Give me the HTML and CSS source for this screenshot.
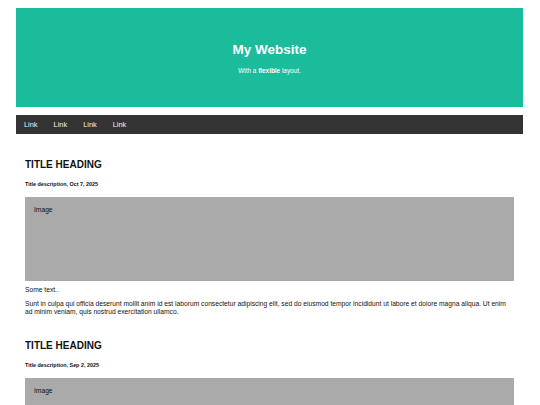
FILE: index.html
```html
<!DOCTYPE html>
<html lang="en">
<head>
<meta charset="utf-8"/>
<title>My Website</title>
<link rel="stylesheet" href="styles.css">
</head>
<body>
<div class="header">
  <h1>My Website</h1>
  <p>With a <b>flexible</b> layout.</p>
</div>
<div class="navbar">
  <a href="#">Link</a>
  <a href="#">Link</a>
  <a href="#">Link</a>
  <a href="#">Link</a>
</div>
<div class="main">
  <div class="card">
    <h2>TITLE HEADING</h2>
    <h5>Title description, Oct 7, 2025</h5>
    <div class="fakeimg">Image</div>
    <p class="lead">Some text..</p>
    <p>Sunt in culpa qui officia deserunt mollit anim id est laborum consectetur adipiscing elit, sed do eiusmod tempor incididunt ut labore et dolore magna aliqua. Ut enim ad minim veniam, quis nostrud exercitation ullamco.</p>
  </div>
  <div class="card">
    <h2>TITLE HEADING</h2>
    <h5>Title description, Sep 2, 2025</h5>
    <div class="fakeimg">Image</div>
    <p class="lead">Some text..</p>
    <p>Sunt in culpa qui officia deserunt mollit anim id est laborum consectetur adipiscing elit, sed do eiusmod tempor incididunt ut labore et dolore magna aliqua. Ut enim ad minim veniam, quis nostrud exercitation ullamco.</p>
  </div>
</div>
</body>
</html>
```

FILE: styles.css
```css
* { box-sizing: border-box; }
body { font-family: "Liberation Sans", Arial, sans-serif; margin: 0; padding: 8px 17px 0 16px; background: #fff; color: #111; }
.header {
  background: #1abc9c;
  color: white;
  text-align: center;
  padding: 33px 10px 32px 10px;
  height: 99px;
}
.header h1 { font-size: 13.5px; line-height: 17px; margin: 0; }
.header p { font-size: 6.4px; line-height: 8px; margin: 9px 0 0 0; }
.navbar {
  display: flex;
  background: #333;
  height: 19px;
  margin-top: 8px;
  align-items: center;
}
.navbar a {
  color: #f2f2f2;
  text-decoration: none;
  font-size: 7.4px;
  padding: 0 8px;
}
.main { padding-top: 16px; }
.card { background: white; padding: 9px; margin-bottom: 6px; }
.card h2 { font-size: 10px; line-height: 12px; margin: 0; }
.card h5 { font-size: 5.4px; line-height: 6px; margin: 10px 0 10px 0; }
.fakeimg {
  background: #aaa;
  height: 84px;
  padding: 9px;
  font-size: 6.7px;
  line-height: 8px;
}
.card p { font-size: 6.7px; line-height: 8px; margin: 6px 0 0 0; }
.card p.lead { margin-top: 5px; }
```
